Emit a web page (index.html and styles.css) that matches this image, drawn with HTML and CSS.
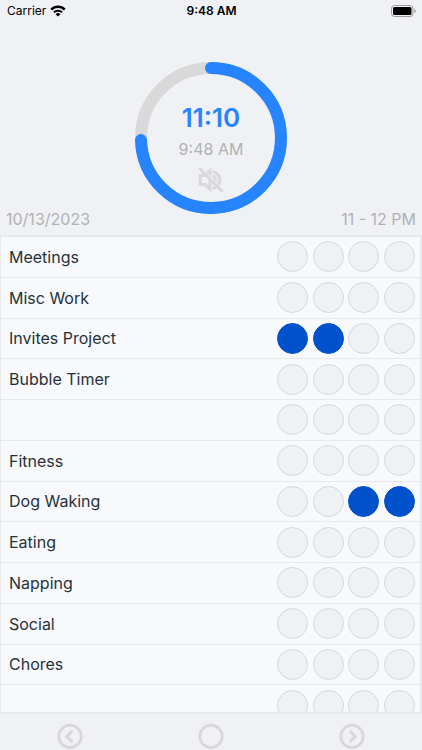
FILE: index.html
```html
<!DOCTYPE html>
<html lang="en">
<head>
<meta charset="utf-8">
<meta name="viewport" content="width=device-width, initial-scale=1">
<title>Bubble Timer</title>
<link rel="stylesheet" href="styles.css">
</head>
<body>
<div class="app">
  <div class="status">
    <div class="carrier">
      <span>Carrier</span>
      <svg width="16" height="12" viewBox="0 0 16 12" aria-hidden="true">
        <path d="M1.2 4.6A9.7 9.7 0 0 1 14.8 4.6" fill="none" stroke="#000" stroke-width="2.4"/>
        <path d="M3.9 7.3A5.9 5.9 0 0 1 12.1 7.3" fill="none" stroke="#000" stroke-width="2"/>
        <path d="M8 11.6L5.6 9.2A3.4 3.4 0 0 1 10.4 9.2Z"/>
      </svg>
    </div>
    <span class="clock">9:48 AM</span>
    <svg class="battery" width="25" height="12" viewBox="0 0 25 12" aria-hidden="true">
      <rect x=".5" y=".5" width="21.500" height="11" rx="3" fill="none" stroke="#9b9b9e"/>
      <rect x="2" y="2" width="18.500" height="8" rx="1.500"/>
      <path d="M23.300 4v4q1.400-.6 1.400-2t-1.400-2z" fill="#9b9b9e"/>
    </svg>
  </div>

  <header class="header">
    <div class="dial">
      <svg class="ring" viewBox="0 0 152 152" aria-hidden="true">
        <circle cx="76" cy="76" r="70" fill="none" stroke="#d9d9d9" stroke-width="12"/>
        <path d="M76 6A70 70 0 1 1 6 78" fill="none" stroke="#2684ff" stroke-width="12" stroke-linecap="round"/>
      </svg>
      <div class="readout">
        <span class="remaining">11:10</span>
        <span class="now">9:48 AM</span>
        <button class="icon-button" type="button" aria-label="Sound off">
          <svg width="26" height="26" viewBox="0 0 26 26" fill="none" stroke="#d9d9db" stroke-width="3">
            <path d="M2.200 8.500V17.500H7L12 22.400V3.600L7 8.500Z"/>
            <path d="M14.500 4.500A8.600 8.600 0 0 1 14.500 21.500M14.500 9A4.200 4.200 0 0 1 14.500 17"/>
            <path d="M3 .8L26 23.800" stroke="#f0f1f5" stroke-width="1.500"/>
            <path d="M1.300 1.300L24.600 24.600"/>
          </svg>
        </button>
      </div>
    </div>
    <div class="period"><span>10/13/2023</span><span>11 - 12 PM</span></div>
  </header>

  <main class="list">
    <div class="rows">
      <div class="row"><span class="name">Meetings</span><div class="bubbles"><input type="checkbox" aria-label="Meetings, quarter 1"><input type="checkbox" aria-label="Meetings, quarter 2"><input type="checkbox" aria-label="Meetings, quarter 3"><input type="checkbox" aria-label="Meetings, quarter 4"></div></div>
      <div class="row"><span class="name">Misc Work</span><div class="bubbles"><input type="checkbox" aria-label="Misc Work, quarter 1"><input type="checkbox" aria-label="Misc Work, quarter 2"><input type="checkbox" aria-label="Misc Work, quarter 3"><input type="checkbox" aria-label="Misc Work, quarter 4"></div></div>
      <div class="row"><span class="name">Invites Project</span><div class="bubbles"><input type="checkbox" aria-label="Invites Project, quarter 1" checked><input type="checkbox" aria-label="Invites Project, quarter 2" checked><input type="checkbox" aria-label="Invites Project, quarter 3"><input type="checkbox" aria-label="Invites Project, quarter 4"></div></div>
      <div class="row"><span class="name">Bubble Timer</span><div class="bubbles"><input type="checkbox" aria-label="Bubble Timer, quarter 1"><input type="checkbox" aria-label="Bubble Timer, quarter 2"><input type="checkbox" aria-label="Bubble Timer, quarter 3"><input type="checkbox" aria-label="Bubble Timer, quarter 4"></div></div>
      <div class="row"><span class="name"></span><div class="bubbles"><input type="checkbox" aria-label="Unnamed, quarter 1"><input type="checkbox" aria-label="Unnamed, quarter 2"><input type="checkbox" aria-label="Unnamed, quarter 3"><input type="checkbox" aria-label="Unnamed, quarter 4"></div></div>
      <div class="row"><span class="name">Fitness</span><div class="bubbles"><input type="checkbox" aria-label="Fitness, quarter 1"><input type="checkbox" aria-label="Fitness, quarter 2"><input type="checkbox" aria-label="Fitness, quarter 3"><input type="checkbox" aria-label="Fitness, quarter 4"></div></div>
      <div class="row"><span class="name">Dog Waking</span><div class="bubbles"><input type="checkbox" aria-label="Dog Waking, quarter 1"><input type="checkbox" aria-label="Dog Waking, quarter 2"><input type="checkbox" aria-label="Dog Waking, quarter 3" checked><input type="checkbox" aria-label="Dog Waking, quarter 4" checked></div></div>
      <div class="row"><span class="name">Eating</span><div class="bubbles"><input type="checkbox" aria-label="Eating, quarter 1"><input type="checkbox" aria-label="Eating, quarter 2"><input type="checkbox" aria-label="Eating, quarter 3"><input type="checkbox" aria-label="Eating, quarter 4"></div></div>
      <div class="row"><span class="name">Napping</span><div class="bubbles"><input type="checkbox" aria-label="Napping, quarter 1"><input type="checkbox" aria-label="Napping, quarter 2"><input type="checkbox" aria-label="Napping, quarter 3"><input type="checkbox" aria-label="Napping, quarter 4"></div></div>
      <div class="row"><span class="name">Social</span><div class="bubbles"><input type="checkbox" aria-label="Social, quarter 1"><input type="checkbox" aria-label="Social, quarter 2"><input type="checkbox" aria-label="Social, quarter 3"><input type="checkbox" aria-label="Social, quarter 4"></div></div>
      <div class="row"><span class="name">Chores</span><div class="bubbles"><input type="checkbox" aria-label="Chores, quarter 1"><input type="checkbox" aria-label="Chores, quarter 2"><input type="checkbox" aria-label="Chores, quarter 3"><input type="checkbox" aria-label="Chores, quarter 4"></div></div>
      <div class="row"><span class="name"></span><div class="bubbles"><input type="checkbox" aria-label="Unnamed, quarter 1"><input type="checkbox" aria-label="Unnamed, quarter 2"><input type="checkbox" aria-label="Unnamed, quarter 3"><input type="checkbox" aria-label="Unnamed, quarter 4"></div></div>
    </div>
  </main>

  <nav class="footer">
    <button class="icon-button" type="button" aria-label="Previous hour">
      <svg width="26" height="26" viewBox="0 0 26 26" fill="none" stroke="#d8d8da" stroke-width="2.800"><circle cx="13" cy="13.400" r="11.200"/><path d="M15.200 7.900L9.700 13.400L15.200 18.900" stroke-width="3"/></svg>
    </button>
    <button class="icon-button" type="button" aria-label="Current hour">
      <svg width="26" height="26" viewBox="0 0 26 26" fill="none" stroke="#d8d8da" stroke-width="2.800"><circle cx="13" cy="13.400" r="11.200"/></svg>
    </button>
    <button class="icon-button" type="button" aria-label="Next hour">
      <svg width="26" height="26" viewBox="0 0 26 26" fill="none" stroke="#d8d8da" stroke-width="2.800"><circle cx="13" cy="13.400" r="11.200"/><path d="M10.800 7.900L16.300 13.400L10.800 18.900" stroke-width="3"/></svg>
    </button>
  </nav>
</div>
</body>
</html>
```
FILE: styles.css
```css
* {
  box-sizing: border-box;
}

body {
  margin: 0;
  background: #f0f1f5;
  color: #263238;
  font-family: Inter, "Liberation Sans", sans-serif;
  font-size: 16px;
}

.app {
  display: flex;
  flex-direction: column;
  height: 100vh;
  overflow: hidden;
}

.status {
  display: grid;
  grid-template-columns: 1fr auto 1fr;
  align-items: center;
  height: 21px;
  padding: 0 6px 0 7px;
  color: #000;
  font-size: 12px;
}

.carrier {
  display: flex;
  align-items: center;
  gap: 4px;
}

.clock {
  font-weight: 600;
}

.battery {
  justify-self: end;
}

.header {
  padding-top: 41px;
}

.dial {
  display: grid;
  width: 152px;
  margin: 0 auto;
}

.ring,
.readout {
  grid-area: 1 / 1;
}

.ring {
  display: block;
  width: 100%;
}

.readout {
  display: flex;
  flex-direction: column;
  align-items: center;
  padding-top: 40px;
}

.remaining {
  color: #2684ff;
  font-size: 26px;
  font-weight: 600;
  line-height: 31px;
}

.now {
  margin-bottom: 2px;
  color: #b0b2b6;
  line-height: 32px;
}

.icon-button {
  display: flex;
  padding: 0;
  border: 0;
  background: none;
}

.period {
  display: flex;
  justify-content: space-between;
  margin-top: -9px;
  padding: 0 6px;
  color: #b0b2b6;
  line-height: 28px;
}

.list {
  flex: 1;
  min-height: 0;
  margin-top: 2px;
  overflow: hidden;
  border: solid #e8e9ed;
  border-width: 2px 2px 2px 1px;
  background: #f8f9fc;
}

.rows {
  display: grid;
  grid-auto-rows: 1fr;
  height: 489px;
}

.row {
  display: flex;
  align-items: center;
  justify-content: space-between;
  padding: 0 5px 0 8px;
  border-bottom: 1px solid #e8e9ed;
}

.bubbles {
  display: flex;
  justify-content: space-between;
  width: 138px;
}

.bubbles input {
  appearance: none;
  width: 31px;
  height: 31px;
  margin: 0;
  border: 1px solid #d6d7da;
  border-radius: 50%;
  background: #f0f1f5;
}

.bubbles input:checked {
  border-color: #0052cc;
  background: #0052cc;
}

.footer {
  display: flex;
  justify-content: space-around;
  height: 36px;
  padding-top: 9px;
}
```
